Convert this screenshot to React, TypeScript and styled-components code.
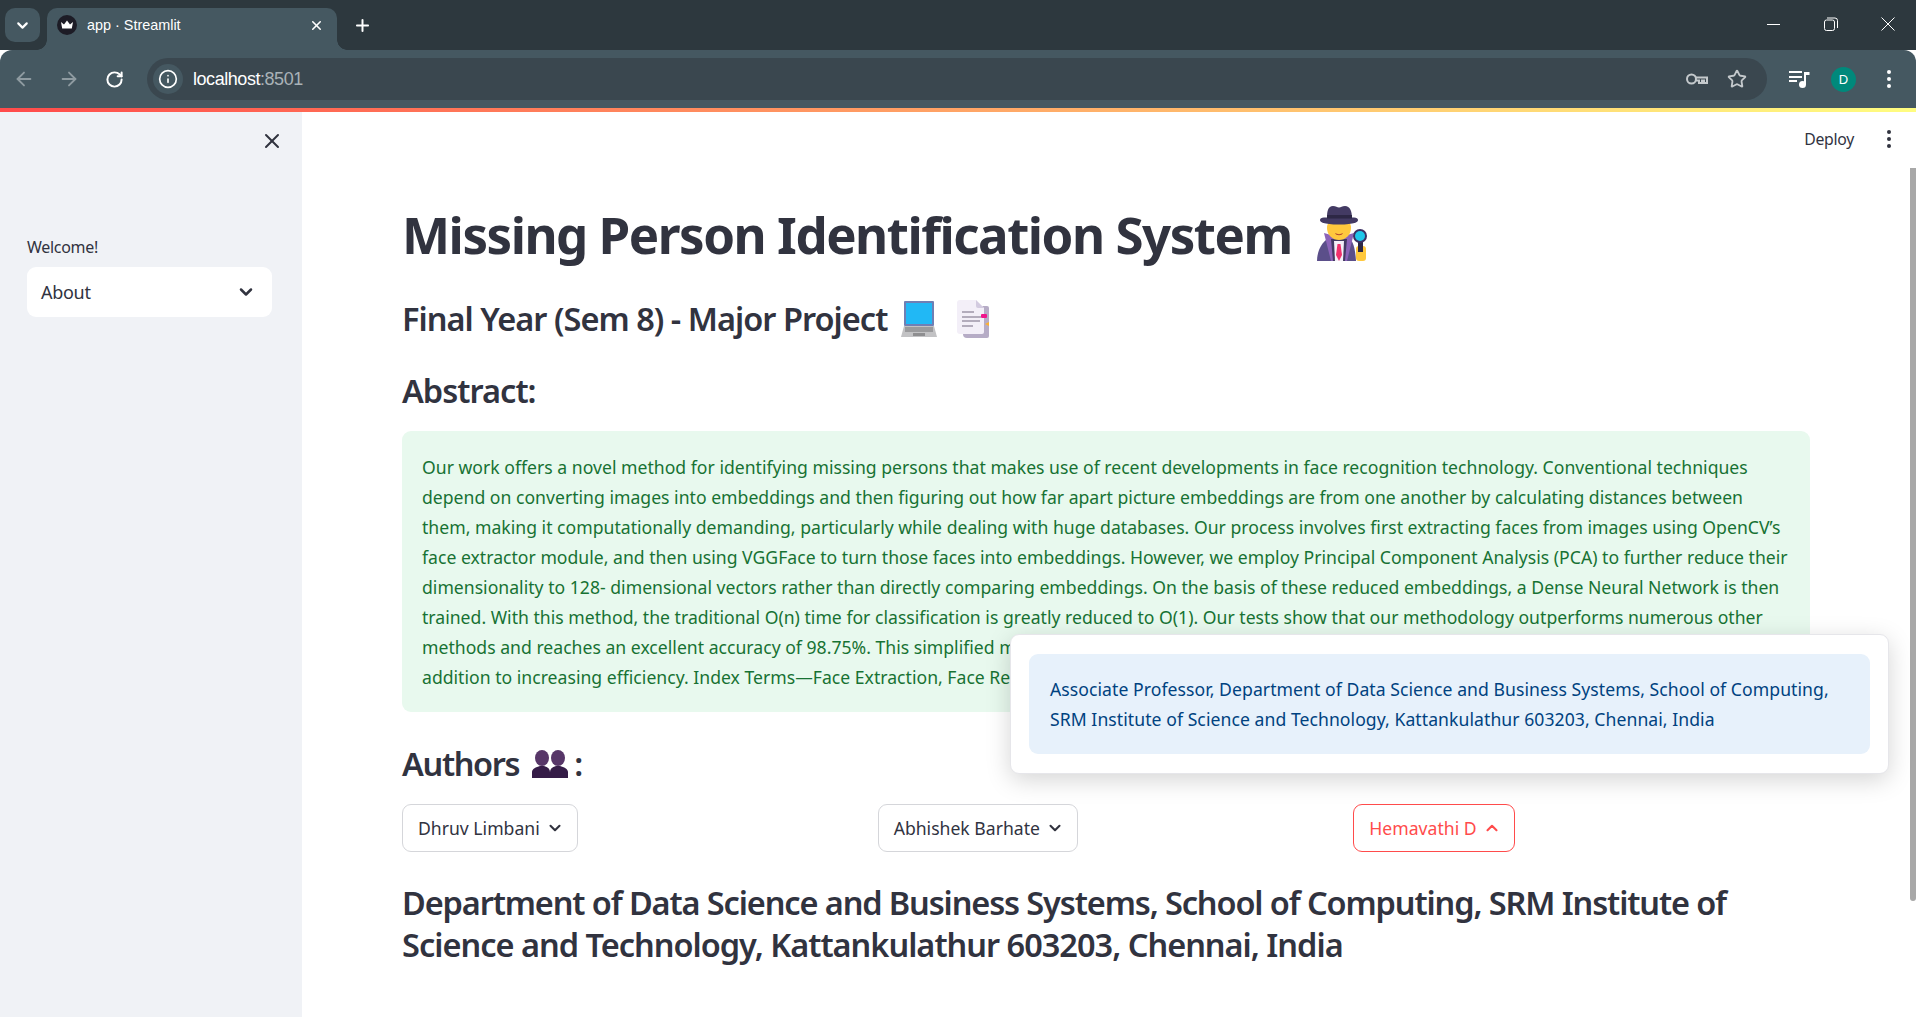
import React from 'react';
import styled, { createGlobalStyle } from 'styled-components';
import { ArrowLeft, ArrowRight, ChevronDown, ChevronUp, Info, Plus, RotateCw, Star, X } from 'lucide-react';

const Global = createGlobalStyle`
  html, body { margin: 0; padding: 0; height: 100%; overflow: hidden; background: #fff; }
  body { font-family: "Noto Sans", "Open Sans", sans-serif; color: #31333f; }
`;

const Page = styled.div`
  position: relative;
  width: 1916px;
  height: 1017px;
  overflow: hidden;
  display: flex;
  flex-direction: column;
`;

const TabStrip = styled.div`
  height: 50px;
  background: #2d383e;
  display: flex;
  align-items: flex-start;
  padding: 8px 0 0 5px;
  box-sizing: border-box;
  color: #fff;
`;

const TabSearch = styled.div`
  width: 35px;
  height: 34px;
  border-radius: 10px;
  background: #455861;
  display: flex;
  align-items: center;
  justify-content: center;
  margin-right: 7px;
`;

const Tab = styled.div`
  position: relative;
  width: 290px;
  height: 42px;
  background: #455861;
  border-radius: 10px 10px 0 0;
  display: flex;
  align-items: center;
  padding: 0 13px 8px 10px;
  box-sizing: border-box;
  font-family: "Liberation Sans", sans-serif;
  font-size: 14.4px;
  color: #fff;
  margin-right: 12px;
  &::before, &::after {
    content: '';
    position: absolute;
    bottom: 0;
    width: 10px;
    height: 10px;
  }
  &::before { left: -10px; background: radial-gradient(circle at 0 0, #2d383e 9.5px, #455861 10px); }
  &::after { right: -10px; background: radial-gradient(circle at 100% 0, #2d383e 9.5px, #455861 10px); }
`;

const TabTitle = styled.span`
  flex: 1;
  margin-left: 10px;
`;

const NewTab = styled.div`
  height: 34px;
  display: flex;
  align-items: center;
  margin-left: 4px;
`;

const WindowControls = styled.div`
  margin-left: auto;
  height: 32px;
  display: flex;
  align-items: center;
  gap: 43px;
  padding-right: 21px;
`;

const Toolbar = styled.div`
  height: 58px;
  background: #455861;
  border-radius: 12px 12px 0 0;
  display: flex;
  align-items: center;
  box-sizing: border-box;
  padding: 0 24px 0 13px;
  color: #fff;
`;

const NavGroup = styled.div`
  display: flex;
  align-items: center;
  gap: 23px;
  width: 134px;
`;

const Reload = styled(RotateCw)`
  margin-left: 2px;
`;

const UrlPill = styled.div`
  width: 1620px;
  height: 42px;
  border-radius: 21px;
  background: #3a474f;
  display: flex;
  align-items: center;
  padding: 0 20px 0 6px;
  box-sizing: border-box;
  font-family: "Liberation Sans", sans-serif;
  font-size: 18px;
  letter-spacing: -0.45px;
`;

const InfoChip = styled.div`
  width: 30px;
  height: 30px;
  border-radius: 50%;
  background: #455861;
  display: flex;
  align-items: center;
  justify-content: center;
  margin-right: 10px;
`;

const Port = styled.span`
  color: #a9b2b7;
`;

const PillIcons = styled.div`
  margin-left: auto;
  display: flex;
  align-items: center;
  gap: 18px;
  color: #c4c9cc;
`;

const ToolIcons = styled.div`
  display: flex;
  align-items: center;
  margin-left: auto;
  gap: 21px;
`;

const Avatar = styled.div`
  width: 25px;
  height: 25px;
  border-radius: 50%;
  background: #00897b;
  color: #fff;
  font-family: "Liberation Sans", sans-serif;
  font-size: 13px;
  margin-right: 9px;
  display: flex;
  align-items: center;
  justify-content: center;
`;

const Decoration = styled.div`
  height: 4px;
  background: linear-gradient(90deg, #ff4b4b, #fffd80);
`;

const Body = styled.div`
  flex: 1;
  display: flex;
  min-height: 0;
  position: relative;
`;

const Sidebar = styled.aside`
  width: 302px;
  flex: none;
  background: #f0f2f6;
  padding: 17px 30px 0 27px;
  box-sizing: border-box;
  display: flex;
  flex-direction: column;
`;

const SidebarClose = styled.div`
  align-self: flex-end;
  height: 24px;
  margin-right: -12px;
  color: #31333f;
`;

const SidebarLabel = styled.div`
  margin-top: 82px;
  font-size: 16px;
  letter-spacing: -0.3px;
  line-height: 24px;
`;

const Select = styled.div`
  margin-top: 8px;
  height: 50px;
  width: 245px;
  background: #fff;
  border-radius: 9px;
  display: flex;
  align-items: center;
  justify-content: space-between;
  padding: 0 16px 0 14px;
  box-sizing: border-box;
  font-size: 18px;
  letter-spacing: -0.3px;
`;

const Main = styled.main`
  flex: 1;
  display: flex;
  flex-direction: column;
  padding: 0 106px 0 100px;
  min-width: 0;
`;

const MainHeader = styled.div`
  height: 56px;
  margin-right: -106px;
  padding: 0 24px 2px 0;
  box-sizing: border-box;
  display: flex;
  align-items: center;
  justify-content: flex-end;
  gap: 32px;
  font-size: 15.8px;
  letter-spacing: -0.3px;
`;

const Title = styled.h1`
  margin: 33px 0 0;
  font-size: 51px;
  line-height: 66px;
  font-weight: 700;
  letter-spacing: -1.48px;
  display: flex;
  align-items: center;
  white-space: nowrap;
`;

const Heading = styled.h3<{ $top: number; $spacing?: number }>`
  margin: ${p => p.$top}px 0 0;
  font-size: 32.5px;
  line-height: 42px;
  font-weight: 600;
  letter-spacing: ${p => p.$spacing ?? -0.97}px;
  display: flex;
  flex-wrap: wrap;
  align-items: center;
  white-space: nowrap;
`;

const HeadingLine = styled.div<{ $spacing: number }>`
  width: 100%;
  letter-spacing: ${p => p.$spacing}px;
`;

const Emoji = styled.svg<{ $left: number; $right?: number }>`
  flex: none;
  margin-left: ${p => p.$left}px;
  margin-right: ${p => p.$right ?? 0}px;
`;

const SuccessBox = styled.div`
  margin-top: 19px;
  height: 281px;
  box-sizing: border-box;
  padding: 21px 20px;
  background: #e8f9ee;
  color: #177233;
  border-radius: 9px;
  font-size: 17.6px;
  line-height: 30px;
  letter-spacing: 0.015px;
  white-space: nowrap;
  overflow: hidden;
`;

const Columns = styled.div`
  margin-top: 19px;
  display: grid;
  grid-template-columns: repeat(3, 1fr);
  column-gap: 19px;
`;

const AuthorButton = styled.button<{ $open?: boolean }>`
  justify-self: start;
  height: 48px;
  padding: 0 13px 0 15px;
  background: #fff;
  border: 1px solid ${p => (p.$open ? '#ff4b4b' : '#d5d6da')};
  border-radius: 9px;
  color: ${p => (p.$open ? '#ff4b4b' : '#31333f')};
  display: flex;
  align-items: center;
  gap: 6px;
  font-family: inherit;
  font-size: 17.6px;
`;

const Popover = styled.div`
  position: absolute;
  left: 1010px;
  top: 522px;
  width: 879px;
  height: 140px;
  box-sizing: border-box;
  padding: 19px 18px;
  background: #fff;
  border-radius: 9px;
  border: 1px solid #e6e6ea;
  box-shadow: 0 6px 24px rgba(0, 0, 0, 0.17);
`;

const InfoBox = styled.div`
  height: 100px;
  box-sizing: border-box;
  padding: 20px 20px 20px 21px;
  background: #e7f1fb;
  color: #004280;
  border-radius: 9px;
  font-size: 17.6px;
  line-height: 30px;
  letter-spacing: 0.06px;
  white-space: nowrap;
`;

const Scrollbar = styled.div`
  position: absolute;
  right: 0;
  top: 56px;
  width: 6px;
  height: 733px;
  background: #a8a8a8;
  border-radius: 0 0 3px 3px;
`;

const Line = styled.div``;

const Detective = () => (
  <Emoji $left={24} width="54" height="60" viewBox="0 0 54 60">
    <path d="M1 57c0-11 6-21 14-24h16c5 2 8 8 9 24z" fill="#5b4f8a" />
    <path d="M15 31l-7-2 7 28h16l7-28-7 2-8 8z" fill="#8b63b8" />
    <path d="M15 35h16l-2 22H17z" fill="#433a63" />
    <path d="M18 37h10l-1 20h-8z" fill="#f3eff8" />
    <path d="M21.5 40h3l1.5 11-3 6-3-6z" fill="#f0306c" />
    <circle cx="23" cy="24" r="12" fill="#ffc83d" />
    <path d="M4 16c0-1.5 1.500-2.500 4-2.500h30c2.500 0 4 1 4 2.500 0 2-3 4.500-19 4.500S4 18 4 16z" fill="#433a63" />
    <path d="M11 14c0-7 1-12 6-12 3 0 4 1.500 6 1.500S26 2 29 2c5 0 7 5 7 12z" fill="#433a63" />
    <rect x="11" y="11" width="25" height="3.500" fill="#2d2745" />
    <path d="M19 29c2.500 1.500 5.500 1.500 8 0-1 3-7 3-8 0z" fill="#b3452e" />
    <rect x="40" y="42" width="10" height="15" rx="3" fill="#ffc83d" />
    <rect x="42" y="37" width="5" height="11" fill="#2d2745" />
    <circle cx="44" cy="32" r="7" fill="#3b2f63" />
    <circle cx="44" cy="32" r="5" fill="#1fc6ea" />
  </Emoji>
);

const Laptop = () => (
  <Emoji $left={14} width="36" height="37" viewBox="0 0 36 37">
    <rect x="3" y="0" width="30" height="25" rx="1" fill="#6f7fb4" />
    <rect x="5" y="2" width="26" height="21" fill="#21b8f5" />
    <path d="M3 25h30l3 11H0z" fill="#c2c2c4" />
    <rect x="4" y="26" width="28" height="5" fill="#9a9a9c" />
    <rect x="12" y="32" width="12" height="3" fill="#8e8e90" />
  </Emoji>
);

const Document = () => (
  <Emoji $left={20} width="34" height="38" viewBox="0 0 34 38">
    <path d="M6 6h24a2 2 0 0 1 2 2v28a2 2 0 0 1-2 2H10a4 4 0 0 1-4-4z" fill="#b6acc6" />
    <path d="M3 0h16l8 8v24a2 2 0 0 1-2 2H3a3 3 0 0 1-3-3V3a3 3 0 0 1 3-3z" fill="#f3eff8" />
    <path d="M19 0l8 8h-6a2 2 0 0 1-2-2z" fill="#d3cbe0" />
    <path d="M5 12h12M5 17h19M5 21h18M5 26h11" stroke="#9e97a8" strokeWidth="1.4" />
    <rect x="24" y="14" width="6" height="4" rx="1" fill="#f0148c" />
    <path d="M28 24l4-2v4z" fill="#ffb02e" />
  </Emoji>
);

const Busts = () => (
  <Emoji $left={13} $right={6} width="36" height="28" viewBox="0 0 36 28">
    <ellipse cx="10" cy="8" rx="7" ry="8" fill="#573668" />
    <ellipse cx="26" cy="8" rx="7" ry="8" fill="#573668" />
    <path d="M0 28v-6c0-3 4-5 8-6h4c4 1 6 3 6 6 0-3 2-5 6-6h4c4 1 8 3 8 6v6z" fill="#351c47" />
  </Emoji>
);

const Favicon = () => (
  <svg width="20" height="20" viewBox="0 0 20 20">
    <circle cx="10" cy="10" r="10" fill="#1d1c26" />
    <path d="M4 7l3 2.500L10 5.500l3 4L16 7l-1.200 6.500H5.200z" fill="#fff" />
  </svg>
);

const Restore = () => (
  <svg width="14" height="14" viewBox="0 0 14 14" fill="none" stroke="#fff" strokeWidth="1">
    <rect x="0.5" y="3" width="10" height="10.5" rx="2" />
    <path d="M3 1h8a2.500 2.500 0 0 1 2.500 2.500V11" />
  </svg>
);

const Minimize = () => (
  <svg width="14" height="14" viewBox="0 0 14 14" stroke="#fff" strokeWidth="1">
    <path d="M0 7.500h13" />
  </svg>
);

const CloseWin = () => (
  <svg width="14" height="14" viewBox="0 0 14 14" stroke="#fff" strokeWidth="1">
    <path d="M0.5 0.5l13 13M13.500 0.5l-13 13" />
  </svg>
);

const KeyIcon = () => (
  <svg width="24" height="14" viewBox="0 0 24 14" fill="none" stroke="currentColor" strokeWidth="2">
    <circle cx="6.5" cy="7" r="4.5" />
    <path d="M11 5.500h11V11h-3V8.500h-2V11h-3V8.500h-3" />
  </svg>
);

const MediaIcon = () => (
  <svg width="21" height="18" viewBox="0 0 21 18" fill="#fff">
    <rect x="0" y="1" width="13" height="2" />
    <rect x="0" y="6" width="13" height="2" />
    <rect x="0" y="10" width="8" height="2" />
    <circle cx="13.5" cy="14.5" r="3.5" />
    <path d="M15 2h5.500v3H17v9.500h-2z" />
  </svg>
);

const Dots = ({ color }: { color: string }) => (
  <svg width="6" height="20" viewBox="0 0 6 20" fill={color}>
    <circle cx="3" cy="3" r="2" />
    <circle cx="3" cy="10" r="2" />
    <circle cx="3" cy="17" r="2" />
  </svg>
);

const abstractLines = [
  'Our work offers a novel method for identifying missing persons that makes use of recent developments in face recognition technology. Conventional techniques',
  'depend on converting images into embeddings and then figuring out how far apart picture embeddings are from one another by calculating distances between',
  'them, making it computationally demanding, particularly while dealing with huge databases. Our process involves first extracting faces from images using OpenCV’s',
  'face extractor module, and then using VGGFace to turn those faces into embeddings. However, we employ Principal Component Analysis (PCA) to further reduce their',
  'dimensionality to 128- dimensional vectors rather than directly comparing embeddings. On the basis of these reduced embeddings, a Dense Neural Network is then',
  'trained. With this method, the traditional O(n) time for classification is greatly reduced to O(1). Our tests show that our methodology outperforms numerous other',
  'methods and reaches an excellent accuracy of 98.75%. This simplified method maintains high accuracy in',
  'addition to increasing efficiency. Index Terms—Face Extraction, Face Recognition, Dimensionality Reduction',
];

const App = () => (
  <Page>
    <Global />
    <TabStrip>
      <TabSearch>
        <ChevronDown size={17} strokeWidth={3} />
      </TabSearch>
      <Tab>
        <Favicon />
        <TabTitle>app · Streamlit</TabTitle>
        <X size={15} strokeWidth={2.5} />
      </Tab>
      <NewTab>
        <Plus size={19} strokeWidth={2.5} />
      </NewTab>
      <WindowControls>
        <Minimize />
        <Restore />
        <CloseWin />
      </WindowControls>
    </TabStrip>
    <Toolbar>
      <NavGroup>
        <ArrowLeft size={22} color="#8f9ba1" />
        <ArrowRight size={22} color="#8f9ba1" />
        <Reload size={19} strokeWidth={2.5} />
      </NavGroup>
      <UrlPill>
        <InfoChip>
          <Info size={20} strokeWidth={2} />
        </InfoChip>
        localhost<Port>:8501</Port>
        <PillIcons>
          <KeyIcon />
          <Star size={20} strokeWidth={2.2} />
        </PillIcons>
      </UrlPill>
      <ToolIcons>
        <MediaIcon />
        <Avatar>D</Avatar>
        <Dots color="#fff" />
      </ToolIcons>
    </Toolbar>
    <Decoration />
    <Body>
      <Sidebar>
        <SidebarClose>
          <X size={24} strokeWidth={2} />
        </SidebarClose>
        <SidebarLabel>Welcome!</SidebarLabel>
        <Select>
          About
          <ChevronDown size={20} strokeWidth={3} />
        </Select>
      </Sidebar>
      <Main>
        <MainHeader>
          Deploy
          <Dots color="#31333f" />
        </MainHeader>
        <Title>
          Missing Person Identification System
          <Detective />
        </Title>
        <Heading $top={31}>
          Final Year (Sem 8) - Major Project
          <Laptop />
          <Document />
        </Heading>
        <Heading $top={30}>Abstract:</Heading>
        <SuccessBox>
          {abstractLines.map(line => (
            <Line key={line}>{line}</Line>
          ))}
        </SuccessBox>
        <Heading $top={31} $spacing={-1.35}>
          Authors
          <Busts />:
        </Heading>
        <Columns>
          <AuthorButton>
            Dhruv Limbani
            <ChevronDown size={18} strokeWidth={2.8} />
          </AuthorButton>
          <AuthorButton>
            Abhishek Barhate
            <ChevronDown size={18} strokeWidth={2.8} />
          </AuthorButton>
          <AuthorButton $open>
            Hemavathi D
            <ChevronUp size={18} strokeWidth={2.8} />
          </AuthorButton>
        </Columns>
        <Heading $top={30}>
          <HeadingLine $spacing={-1.12}>
            Department of Data Science and Business Systems, School of Computing, SRM Institute of
          </HeadingLine>
          <HeadingLine $spacing={-1}>Science and Technology, Kattankulathur 603203, Chennai, India</HeadingLine>
        </Heading>
      </Main>
      <Scrollbar />
      <Popover>
        <InfoBox>
          <Line>Associate Professor, Department of Data Science and Business Systems, School of Computing,</Line>
          <Line>SRM Institute of Science and Technology, Kattankulathur 603203, Chennai, India</Line>
        </InfoBox>
      </Popover>
    </Body>
  </Page>
);

export default App;
